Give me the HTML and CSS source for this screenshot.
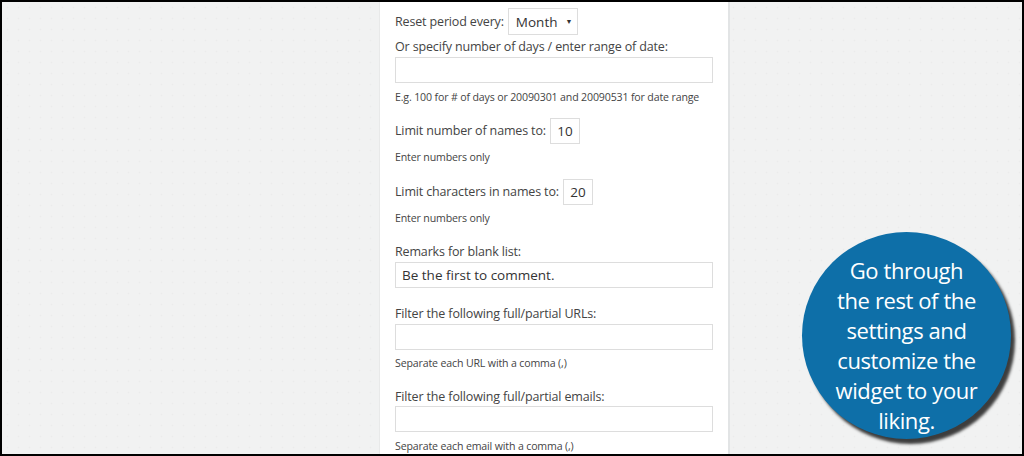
FILE: index.html
```html
<!DOCTYPE html>
<html>
<head>
<meta charset="utf-8">
<link rel="stylesheet" href="styles.css">
</head>
<body>
<div class="frame">
  <div class="panel">
    <div class="row r1">
      <span class="label">Reset period every:</span>
      <span class="select">Month <span class="caret">&#9660;</span></span>
    </div>
    <div class="label block m3">Or specify number of days / enter range of date:</div>
    <div class="input wide m1"></div>
    <div class="hint m6">E.g. 100 for # of days or 20090301 and 20090531 for date range</div>

    <div class="row m13">
      <span class="label">Limit number of names to:</span>
      <span class="input small">10</span>
    </div>
    <div class="hint m5">Enter numbers only</div>

    <div class="row m14">
      <span class="label">Limit characters in names to:</span>
      <span class="input small">20</span>
    </div>
    <div class="hint m5">Enter numbers only</div>

    <div class="label block m17">Remarks for blank list:</div>
    <div class="input wide m1 filled">Be the first to comment.</div>

    <div class="label block m17">Filter the following full/partial URLs:</div>
    <div class="input wide m1"></div>
    <div class="hint m5">Separate each URL with a comma (,)</div>

    <div class="label block m17">Filter the following full/partial emails:</div>
    <div class="input wide"></div>
    <div class="hint m6">Separate each email with a comma (,)</div>
  </div>

  <div class="bubble">
    <p>Go through<br>the rest of the<br>settings and<br>customize the<br>widget to your<br>liking.</p>
  </div>
</div>
</body>
</html>
```

FILE: styles.css
```css
html, body {
  margin: 0;
  padding: 0;
  background: #000;
}
.frame {
  position: relative;
  box-sizing: border-box;
  width: 1024px;
  height: 456px;
  border: 2px solid #000;
  overflow: hidden;
  background-color: #f1f2f2;
  background-image: radial-gradient(circle, #eaecec 0.7px, transparent 1.1px);
  background-size: 11px 11px;
  font-family: "Open Sans", "Noto Sans", sans-serif;
  color: #444;
}
.panel {
  box-sizing: border-box;
  margin-left: 377px;
  width: 351px;
  height: 100%;
  background: #fff;
  border-left: 1px solid #e8e9e9;
  border-right: 2px solid #e2e4e5;
  padding: 6px 0 0 15px;
}
.row {
  display: flex;
  align-items: center;
  gap: 4px;
}
.label {
  font-size: 12.5px;
  line-height: 18px;
  color: #444;
  letter-spacing: -0.15px;
}
.block { display: block; }
.select {
  box-sizing: border-box;
  width: 70px;
  height: 27px;
  border: 1px solid #ddd;
  display: flex;
  align-items: center;
  padding-left: 7px;
  font-size: 13.5px;
  color: #333;
}
.caret {
  font-size: 7px;
  margin-left: 8px;
  color: #333;
}
.input {
  box-sizing: border-box;
  border: 1px solid #ddd;
  background: #fff;
  color: #333;
}
.wide {
  width: 318px;
  height: 26px;
}
.filled {
  font-size: 13.5px;
  line-height: 24px;
  padding-left: 6px;
}
.small {
  width: 30px;
  height: 26px;
  display: flex;
  align-items: center;
  justify-content: center;
  font-size: 13.5px;
}
.hint {
  font-size: 10.6px;
  line-height: 16px;
  color: #444;
  letter-spacing: -0.15px;
}
.m1 { margin-top: 1px; }
.m3 { margin-top: 3px; }
.m5 { margin-top: 5px; }
.m6 { margin-top: 6px; }
.m13 { margin-top: 13px; }
.m14 { margin-top: 14px; }
.m17 { margin-top: 17px; }

.bubble {
  position: absolute;
  left: 800px;
  top: 230px;
  width: 209px;
  height: 207px;
  border-radius: 50%;
  background: #0e6fa8;
  box-shadow: 4px 5px 3px rgba(0,0,0,0.75);
  display: flex;
  align-items: center;
  justify-content: center;
  color: #fff;
  text-align: center;
  box-sizing: border-box;
  padding-top: 18px;
}
.bubble p {
  margin: 0;
  font-family: "Open Sans", "Noto Sans", sans-serif;
  font-size: 22px;
  line-height: 30px;
  letter-spacing: -0.4px;
}
```
